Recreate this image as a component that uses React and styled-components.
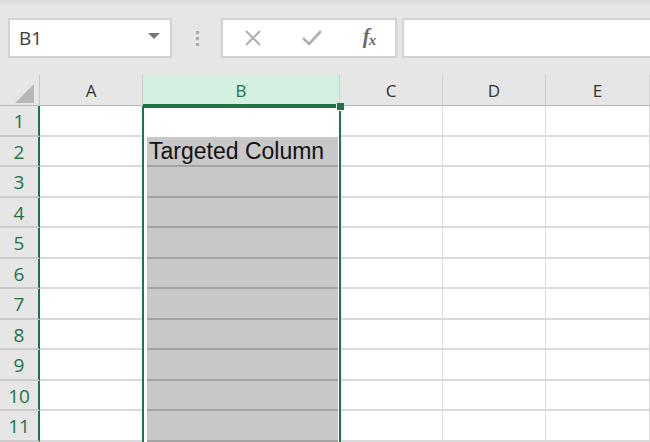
import React from 'react'
import styled, { createGlobalStyle } from 'styled-components'

const GlobalStyle = createGlobalStyle`
  html, body { margin: 0; padding: 0; background: #ffffff; }
  body { width: 650px; height: 442px; overflow: hidden; }
`

const Page = styled.div`
  width: 650px;
  height: 442px;
  overflow: hidden;
  display: flex;
  flex-direction: column;
  font-family: "Open Sans", "Noto Sans", sans-serif;
`

const Toolbar = styled.div`
  height: 75px;
  flex: none;
  display: flex;
  align-items: flex-start;
  padding: 18px 0 0 8px;
  box-sizing: border-box;
  background: linear-gradient(#d9d9d9 0px, #e6e6e6 6px, #e6e6e6 100%);
`

const NameBox = styled.div`
  width: 164px;
  height: 40px;
  box-sizing: border-box;
  background: #fff;
  border: 2px solid #d2d2d2;
  display: flex;
  align-items: center;
  justify-content: space-between;
  padding: 0 10px 0 9px;
  font-size: 19px;
  color: #3c3c3c;
`

const Caret = styled.span`
  width: 0;
  height: 0;
  border-left: 6px solid transparent;
  border-right: 6px solid transparent;
  border-top: 6px solid #767676;
  margin-top: -4px;
`

const Grip = styled.div`
  width: 49px;
  height: 40px;
  display: flex;
  flex-direction: column;
  align-items: center;
  justify-content: center;
  gap: 3px;
  padding-left: 2px;
  box-sizing: border-box;
  & span {
    width: 3px;
    height: 3px;
    background: #a8a8a8;
  }
`

const FormulaButtons = styled.div`
  width: 176px;
  height: 40px;
  box-sizing: border-box;
  background: #fff;
  border: 2px solid #d2d2d2;
  display: grid;
  grid-template-columns: 60px 58px 1fr;
  align-items: center;
  justify-items: center;
`

const Fx = styled.span`
  font-family: "Liberation Serif", "DejaVu Serif", serif;
  font-style: italic;
  font-weight: bold;
  font-size: 21px;
  color: #6a6a6a;
  letter-spacing: -1px;
  margin-left: 2px;
  margin-top: -4px;
  & sub {
    font-size: 15px;
    vertical-align: -2px;
  }
`

const FormulaInput = styled.div`
  margin-left: 5px;
  flex: 1;
  height: 40px;
  box-sizing: border-box;
  background: #fff;
  border: 2px solid #d2d2d2;
  border-right: none;
`

const Sheet = styled.div`
  flex: 1;
  display: grid;
  grid-template-columns: 40px 103px 197px 103px 103px 1fr;
  grid-template-rows: 31px repeat(11, 30.5px);
  position: relative;
`

const Corner = styled.div`
  background: #e6e6e6;
  border-right: 1px solid #c8c8c8;
  border-bottom: 1px solid #b8b8b8;
  position: relative;
  & svg { position: absolute; right: 5px; bottom: 2px; }
`

const ColHead = styled.div`
  background: ${p => (p.$active ? '#d3f0e0' : '#e6e6e6')};
  border-right: 1px solid #cfcfcf;
  border-bottom: ${p => (p.$active ? '2px solid #217346' : '1px solid #b8b8b8')};
  box-sizing: border-box;
  display: flex;
  align-items: center;
  justify-content: center;
  font-size: 17px;
  color: ${p => (p.$active ? '#217346' : '#333')};
  padding-top: ${p => (p.$active ? '2px' : '1px')};
`

const RowHead = styled.div`
  background: #e6e6e6;
  border-bottom: 2px solid #cbcbcb;
  border-right: 2px solid #217346;
  box-sizing: border-box;
  display: flex;
  align-items: center;
  justify-content: center;
  font-size: 19px;
  color: #217346;
  padding-top: 2px;
`

const Cell = styled.div`
  background: #fff;
  border-bottom: 2px solid #dadada;
  border-right: 1px solid #dadada;
  box-sizing: border-box;
`

const SelCell = styled.div`
  position: relative;
  z-index: 1;
  background: #fff;
  box-sizing: border-box;
  border-left: 2px solid #217346;
  border-right: 2px solid #217346;
  border-top: ${p => (p.$first ? '2px solid #217346' : 'none')};
  padding: 0 1px 0 3px;
  margin-left: -1px;
  margin-right: -1px;
  display: flex;
`

const Fill = styled.div`
  flex: 1;
  background: ${p => (p.$shade ? '#c8c8c8' : '#fff')};
  border-bottom: 2px solid ${p => (p.$shade ? '#a3a3a3' : '#fff')};
  font-family: "Liberation Sans", Arial, sans-serif;
  font-size: 23px;
  line-height: 26px;
  color: #111;
  padding: 1px 0 0 2px;
  white-space: nowrap;
  overflow: hidden;
`

const Handle = styled.div`
  position: absolute;
  z-index: 2;
  left: 336px;
  top: 28px;
  width: 7px;
  height: 7px;
  background: #217346;
  border: 1px solid #fff;
  border-top: none;
  border-right: none;
`

const rows = Array.from({ length: 11 }, (_, i) => i + 1)

export default function App() {
  return (
    <Page>
      <GlobalStyle />
      <Toolbar>
        <NameBox>
          <span>B1</span>
          <Caret />
        </NameBox>
        <Grip>
          <span />
          <span />
          <span />
        </Grip>
        <FormulaButtons>
          <svg width="18" height="18" viewBox="0 0 18 18">
            <path d="M2 2 L16 16 M16 2 L2 16" stroke="#b0b0b0" strokeWidth="2" fill="none" />
          </svg>
          <svg width="22" height="18" viewBox="0 0 22 18">
            <path d="M2 9 L8 15 L20 2" stroke="#b0b0b0" strokeWidth="2.6" fill="none" />
          </svg>
          <Fx>f<sub>x</sub></Fx>
        </FormulaButtons>
        <FormulaInput />
      </Toolbar>
      <Sheet>
        <Corner>
          <svg width="19" height="19" viewBox="0 0 19 19">
            <path d="M19 0 L19 19 L0 19 Z" fill="#b7b7b7" />
          </svg>
        </Corner>
        {['A', 'B', 'C', 'D', 'E'].map(c => (
          <ColHead key={c} $active={c === 'B'}>{c}</ColHead>
        ))}
        {rows.map(r => (
          <React.Fragment key={r}>
            <RowHead>{r}</RowHead>
            <Cell />
            <SelCell $first={r === 1}>
              <Fill $shade={r > 1}>{r === 2 ? 'Targeted Column' : ''}</Fill>
            </SelCell>
            <Cell />
            <Cell />
            <Cell />
          </React.Fragment>
        ))}
        <Handle />
      </Sheet>
    </Page>
  )
}
